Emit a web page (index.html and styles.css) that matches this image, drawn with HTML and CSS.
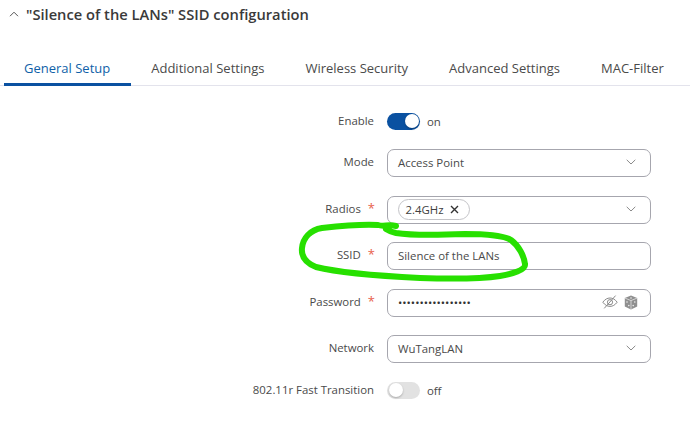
FILE: index.html
```html
<!DOCTYPE html>
<html lang="en">
<head>
<meta charset="utf-8">
<title>SSID configuration</title>
<link rel="stylesheet" href="styles.css">
</head>
<body>
<header class="title-row">
  <svg class="collapse" width="10" height="6" viewBox="0 0 10 6"><path d="M1 5.2 5 1.2l4 4" fill="none" stroke="#555" stroke-width="1"/></svg>
  <h1>"Silence of the LANs" SSID configuration</h1>
</header>
<nav class="tabs">
  <a class="tab active">General Setup</a>
  <a class="tab">Additional Settings</a>
  <a class="tab">Wireless Security</a>
  <a class="tab">Advanced Settings</a>
  <a class="tab">MAC-Filter</a>
</nav>
<form class="form">
  <div class="row row-enable">
    <label class="label plain">Enable</label>
    <div class="control toggle-wrap"><span class="toggle on"><span class="knob"></span></span><span class="state">on</span></div>
  </div>
  <div class="row row-mode">
    <label class="label">Mode</label>
    <div class="control field"><span>Access Point</span><svg class="chev" width="10" height="6" viewBox="0 0 10 6"><path d="M.7.8 5 5l4.3-4.2" fill="none" stroke="#8a8a8a" stroke-width="1"/></svg></div>
  </div>
  <div class="row row-radios">
    <label class="label">Radios<span class="req">*</span></label>
    <div class="control field field-chip"><span class="chip">2.4GHz<svg width="9" height="9" viewBox="0 0 9 9"><path d="M1 1l7 7M8 1 1 8" stroke="#333" stroke-width="1.4" fill="none"/></svg></span><svg class="chev" width="10" height="6" viewBox="0 0 10 6"><path d="M.7.8 5 5l4.3-4.2" fill="none" stroke="#8a8a8a" stroke-width="1"/></svg></div>
  </div>
  <div class="row row-ssid">
    <label class="label">SSID<span class="req">*</span></label>
    <div class="control field"><span>Silence of the LANs</span></div>
  </div>
  <div class="row row-pass">
    <label class="label">Password<span class="req">*</span></label>
    <div class="control field"><span class="dots">•••••••••••••••••</span>
      <span class="icons">
        <svg width="16" height="14" viewBox="0 0 16 14"><path d="M.8 7.2C3 4.3 5.4 3 8 3s5 1.3 7.2 4.2C13 10.1 10.6 11.4 8 11.4S3 10.1.8 7.2Z" fill="none" stroke="#8a8a8a" stroke-width="1"/><circle cx="8" cy="7.2" r="2.6" fill="none" stroke="#8a8a8a" stroke-width="1"/><path d="M13.6.6 2.2 13.4" stroke="#8a8a8a" stroke-width="1"/></svg>
        <svg width="14" height="15" viewBox="0 0 14 15"><path d="M7 .6 13.2 3v8.6L7 14.4.8 11.6V3Z" fill="#8f8f8f"/><path d="M.8 3 7 5.6 13.2 3M7 5.6v8.8" stroke="#e4e4e4" stroke-width=".8" fill="none"/><circle cx="7" cy="3" r=".8" fill="#eee"/><circle cx="3" cy="7" r=".8" fill="#eee"/><circle cx="4.8" cy="10.6" r=".8" fill="#eee"/><circle cx="10.8" cy="7" r=".8" fill="#eee"/><circle cx="9.2" cy="10.6" r=".8" fill="#eee"/></svg>
      </span>
    </div>
  </div>
  <div class="row row-network">
    <label class="label">Network</label>
    <div class="control field"><span>WuTangLAN</span><svg class="chev" width="10" height="6" viewBox="0 0 10 6"><path d="M.7.8 5 5l4.3-4.2" fill="none" stroke="#8a8a8a" stroke-width="1"/></svg></div>
  </div>
  <div class="row row-fast">
    <label class="label plain">802.11r Fast Transition</label>
    <div class="control toggle-wrap"><span class="toggle off"><span class="knob"></span></span><span class="state">off</span></div>
  </div>
</form>
<svg class="scribble" width="690" height="427" viewBox="0 0 690 427"><path d="M396 226C388 224 384 227 378 225C362 224 340 226 322 228C310 230 303 238 302 248C301 257 306 263 316 267C340 273 380 276 420 278C450 279 480 279 500 276C512 274 526 270 525 264C524 256 519 246 511 240C503 235 485 234 465 234C440 235 415 236 396 233C391 232 389 231 386 229" fill="none" stroke="#27e000" stroke-width="6" stroke-linecap="round" stroke-linejoin="round"/></svg>
</body>
</html>
```
FILE: styles.css
```css
* { box-sizing: border-box; }
html, body { margin: 0; padding: 0; }
body {
  width: 690px;
  height: 427px;
  overflow: hidden;
  background: #fff;
  color: #404040;
  font-family: "Open Sans", sans-serif;
  position: relative;
}
.title-row {
  display: flex;
  align-items: center;
  height: 28px;
  padding-left: 9px;
  gap: 7px;
}
.title-row h1 {
  margin: 0;
  font-size: 14.7px;
  font-weight: 600;
  color: #3a3a3a;
}
.tabs {
  display: flex;
  margin-top: 31px;
  padding-left: 4px;
  height: 27px;
  border-bottom: 1px solid #e3e3ec;
}
.tab {
  padding: 0 20.5px;
  font-size: 13px;
  line-height: 18px;
  color: #4a4a4a;
  height: 26px;
  white-space: nowrap;
}
.tab.active { color: #0f5fa8; box-shadow: inset 0 -3px 0 #0a51a1; height: 27px; padding-left: 20px; }
.form { display: flex; flex-direction: column; margin-top: 26px; }
.row { display: flex; align-items: center; }
.label {
  width: 387px;
  padding-right: 13px;
  padding-bottom: 2px;
  text-align: right;
  font-size: 11.4px;
  line-height: 16px;
  color: #4a4a4a;
  white-space: nowrap;
}
.label.plain { padding-bottom: 0; }
.req { color: #e8604c; margin-left: 7px; margin-right: -1px; font-size: 13px; line-height: 1; }
.control { width: 264px; font-size: 11.4px; color: #4a4a4a; }
.field {
  height: 28px;
  border: 1px solid #a6a6ae;
  border-radius: 7px;
  padding: 0 10px 2px;
  display: flex;
  align-items: center;
  justify-content: space-between;
}
.row-enable { height: 18px; }
.row-mode { margin-top: 19px; }
.row-radios { margin-top: 19px; }
.row-ssid { margin-top: 18px; }
.row-pass { margin-top: 19px; }
.row-network { margin-top: 18px; }
.row-fast { margin-top: 18px; height: 18px; }
.toggle-wrap { display: flex; align-items: center; gap: 7px; }
.toggle {
  width: 33px;
  height: 17px;
  border-radius: 9px;
  display: flex;
  align-items: center;
  padding: 0 1.5px;
}
.toggle.on { background: #0a51a1; justify-content: flex-end; }
.toggle.off { background: #e2e2e2; justify-content: flex-start; }
.knob { width: 14px; height: 14px; border-radius: 50%; background: #fff; box-shadow: 0 1px 2px rgba(0,0,0,.25); }
.chev { margin-right: 4px; flex: none; }
.field-chip { padding-left: 10px; }
.chip {
  display: inline-flex;
  align-items: center;
  gap: 6px;
  height: 21px;
  padding: 0 10px 0 6.5px;
  border: 1px solid #c4c4c8;
  border-radius: 11px;
  color: #404040;
}
.dots { font-size: 11.4px; color: #333; }
.icons { display: flex; align-items: center; gap: 6px; margin-right: 2px; }
.scribble { position: absolute; left: 0; top: 0; pointer-events: none; }
```
